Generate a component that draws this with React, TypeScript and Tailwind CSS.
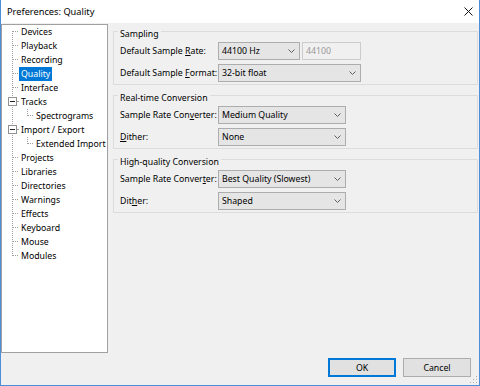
import React from "react";

type Row = {
  label: string;
  level: 1 | 2;
  expander?: boolean;
  selected?: boolean;
  first?: boolean;
  last?: boolean;
};

const rows: Row[] = [
  { label: "Devices", level: 1, first: true },
  { label: "Playback", level: 1 },
  { label: "Recording", level: 1 },
  { label: "Quality", level: 1, selected: true },
  { label: "Interface", level: 1 },
  { label: "Tracks", level: 1, expander: true },
  { label: "Spectrograms", level: 2 },
  { label: "Import / Export", level: 1, expander: true },
  { label: "Extended Import", level: 2 },
  { label: "Projects", level: 1 },
  { label: "Libraries", level: 1 },
  { label: "Directories", level: 1 },
  { label: "Warnings", level: 1 },
  { label: "Effects", level: 1 },
  { label: "Keyboard", level: 1 },
  { label: "Mouse", level: 1 },
  { label: "Modules", level: 1, last: true },
];

const LINE = "#a0a0a0";

function Gutter({ row }: { row: Row }) {
  const w = row.level === 1 ? 17 : 32;
  return (
    <svg width={w} height={14} shapeRendering="crispEdges" className="shrink-0">
      <line
        x1={10.5}
        x2={10.5}
        y1={row.first ? 6 : 0}
        y2={row.last ? 7 : 14}
        stroke={LINE}
        strokeDasharray="1 1"
      />
      {row.level === 1 && !row.expander && (
        <line x1={11} x2={17} y1={6.5} y2={6.5} stroke={LINE} strokeDasharray="1 1" />
      )}
      {row.level === 1 && row.expander && (
        <>
          <line x1={15} x2={17} y1={6.5} y2={6.5} stroke={LINE} />
          <rect x={6.5} y={2.5} width={8} height={8} fill="#ffffff" stroke="#919191" />
          <line x1={8} x2={13} y1={6.5} y2={6.5} stroke="#222222" />
        </>
      )}
      {row.level === 2 && (
        <>
          <line x1={25.5} x2={25.5} y1={0} y2={7} stroke={LINE} strokeDasharray="1 1" />
          <line x1={26} x2={32} y1={6.5} y2={6.5} stroke={LINE} strokeDasharray="1 1" />
        </>
      )}
    </svg>
  );
}

function Chevron() {
  return (
    <svg width={7} height={4} className="shrink-0">
      <polyline points="0.5,0.5 3.5,3.5 6.5,0.5" fill="none" stroke="#606060" strokeWidth={1} />
    </svg>
  );
}

function Combo({ value, w }: { value: string; w: string }) {
  return (
    <div
      className={`${w} h-[18px] flex items-center justify-between border border-[#adadad] bg-[#e5e5e5] pl-[3px] pr-[4px]`}
    >
      <span>{value}</span>
      <Chevron />
    </div>
  );
}

function Label({ children }: { children: React.ReactNode }) {
  return <div className="w-[98px] shrink-0 whitespace-nowrap">{children}</div>;
}

function Group({ title, children, className }: { title: string; children: React.ReactNode; className?: string }) {
  return (
    <div className={`border border-[#dcdcdc] pl-[6px] pb-[2px] ${className ?? ""}`}>
      <div className="-mt-[4px] -ml-[2px] w-fit px-[2px] bg-[#f0f0f0] h-[12px] leading-[12px]">{title}</div>
      <div className="mt-[2px] flex flex-col gap-[4px]">{children}</div>
    </div>
  );
}

export default function App() {
  return (
    <div className="relative w-[480px] h-[386px] bg-[#f0f0f0] border-l border-r border-b border-[#4a8fd8] flex flex-col font-['Noto_Sans',sans-serif] text-[8.75px] leading-[12px] text-black overflow-hidden">
      {/* Title bar */}
      <div className="h-[23px] shrink-0 bg-white flex items-center justify-between pl-[6px] pr-[6px]">
        <span className="text-[9.25px]">Preferences: Quality</span>
        <svg width={9} height={9} shapeRendering="geometricPrecision">
          <line x1={0.5} y1={0.5} x2={8.5} y2={8.5} stroke="#111" strokeWidth={1} />
          <line x1={8.5} y1={0.5} x2={0.5} y2={8.5} stroke="#111" strokeWidth={1} />
        </svg>
      </div>

      {/* Body */}
      <div className="flex h-[330px] shrink-0">
        {/* Tree */}
        <div className="mt-[1px] w-[107px] h-[329px] bg-white border border-[#a0a0a0] pl-0 shrink-0">
          {rows.map((r) => (
            <div key={r.label} className="flex h-[14px] items-center">
              <Gutter row={r} />
              <span
                className={`px-[2px] h-[14px] leading-[14px] whitespace-nowrap ${
                  r.selected ? "bg-[#0078d7] text-white" : ""
                }`}
              >
                {r.label}
              </span>
            </div>
          ))}
        </div>

        {/* Right side */}
        <div className="flex-1 pl-[5px] pr-[1px] pt-[8px]">
          <Group title="Sampling">
            <div className="flex items-center">
              <Label>
                Default Sample <span className="underline">R</span>ate:
              </Label>
              <Combo value="44100 Hz" w="w-[82px]" />
              <div className="ml-[2px] w-[59px] h-[18px] border border-[#cccccc] bg-[#f0f0f0] text-[#9a9a9a] flex items-center pl-[3px]">
                44100
              </div>
            </div>
            <div className="flex items-center">
              <Label>
                Default Sample <span className="underline">F</span>ormat:
              </Label>
              <Combo value="32-bit float" w="w-[143px]" />
            </div>
          </Group>

          <Group title="Real-time Conversion" className="mt-[10px]">
            <div className="flex items-center">
              <Label>
                Sample Rate Con<span className="underline">v</span>erter:
              </Label>
              <Combo value="Medium Quality" w="w-[128px]" />
            </div>
            <div className="flex items-center">
              <Label>
                <span className="underline">D</span>ither:
              </Label>
              <Combo value="None" w="w-[128px]" />
            </div>
          </Group>

          <Group title="High-quality Conversion" className="mt-[10px]">
            <div className="flex items-center">
              <Label>
                Sample Rate Conver<span className="underline">t</span>er:
              </Label>
              <Combo value="Best Quality (Slowest)" w="w-[128px]" />
            </div>
            <div className="flex items-center">
              <Label>
                Dit<span className="underline">h</span>er:
              </Label>
              <Combo value="Shaped" w="w-[128px]" />
            </div>
          </Group>
        </div>
      </div>

      {/* Buttons */}
      <div className="flex justify-end gap-[7px] pr-[8px] mt-[5px]">
        <button className="w-[68px] h-[19px] border border-[#0078d7] shadow-[inset_0_0_0_1px_#0078d7] bg-[#e1e1e1] flex items-center justify-center">
          OK
        </button>
        <button className="w-[68px] h-[19px] border border-[#adadad] bg-[#e1e1e1] flex items-center justify-center">
          Cancel
        </button>
      </div>

      {/* Resize grip */}
      <svg width={8} height={8} className="absolute right-[1px] bottom-[1px]">
        <rect x={6} y={0} width={1} height={1} fill="#b0b0b0" />
        <rect x={3} y={3} width={1} height={1} fill="#b0b0b0" />
        <rect x={6} y={3} width={1} height={1} fill="#b0b0b0" />
        <rect x={0} y={6} width={1} height={1} fill="#b0b0b0" />
        <rect x={3} y={6} width={1} height={1} fill="#b0b0b0" />
        <rect x={6} y={6} width={1} height={1} fill="#b0b0b0" />
      </svg>
    </div>
  );
}
